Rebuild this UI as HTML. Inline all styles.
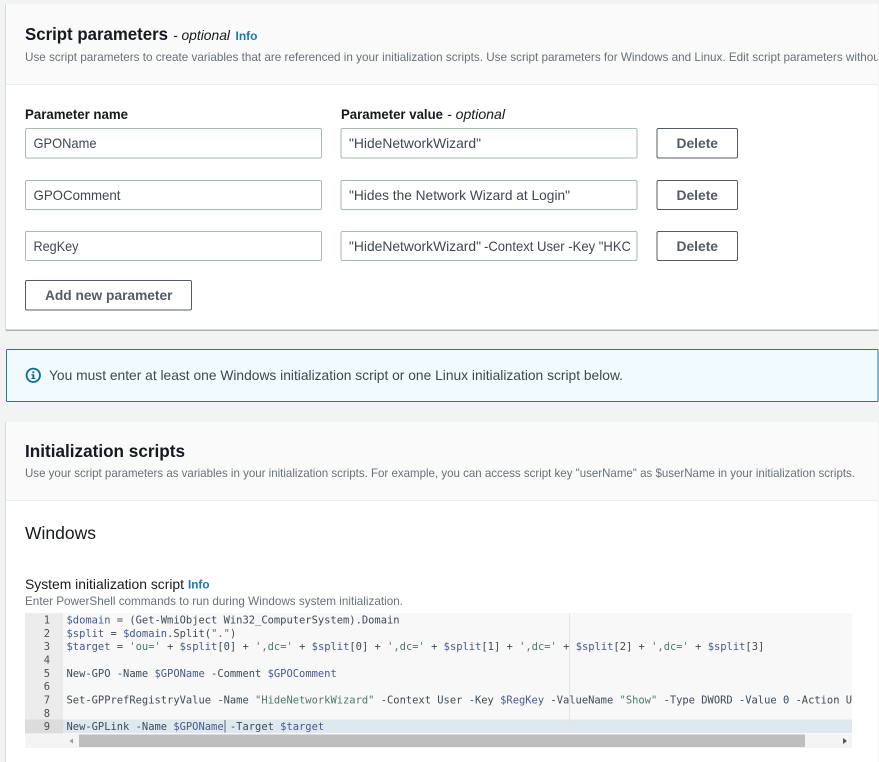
<!DOCTYPE html>
<html><head><meta charset="utf-8"><style>
html,body{margin:0;padding:0;background:#f2f3f3;width:879px;height:762px;overflow:hidden}
svg{display:block}
text{font-family:"Liberation Sans",sans-serif;white-space:pre}
.m{font-family:"DejaVu Sans Mono",monospace;font-size:10.45px;fill:#3f4a56}
.v{fill:#46598f}.s{fill:#4a7a67}.p{fill:#46525f}
.n{font-family:"DejaVu Sans Mono",monospace;font-size:10.45px;fill:#4a4f55;text-anchor:end}
.l{font-size:14px;font-weight:bold;fill:#16191f}
.i{font-size:14px;font-style:italic;fill:#16191f}
.d{font-size:12px;fill:#687078}
.t{font-size:14px;fill:#414750}
.b{font-size:14px;font-weight:bold;fill:#545b64}
.inf{font-size:12px;font-weight:bold;fill:#1a78b4}
</style></head><body>
<svg width="879" height="762" viewBox="0 0 879 762" xmlns="http://www.w3.org/2000/svg">
<defs>
<clipPath id="c1"><rect x="0" y="0" width="878" height="762"/></clipPath>
<clipPath id="c2"><rect x="64" y="613" width="788" height="121"/></clipPath>
<clipPath id="c3"><rect x="345" y="232" width="285" height="28"/></clipPath>
</defs>
<rect width="879" height="762" fill="#f2f3f3"/>

<!-- card 1 -->
<rect x="5" y="4" width="873" height="327" fill="#d5dbdb"/>
<rect x="6" y="4" width="872" height="326" fill="#fff"/>
<rect x="6" y="4" width="872" height="80" fill="#fafafa"/>
<rect x="6" y="84" width="872" height="1" fill="#eaeded"/>
<rect x="6" y="329.5" width="872" height="1.5" fill="#aab2b3"/>
<text x="25" y="40" font-size="17.5" font-weight="bold" fill="#16191f" textLength="143" lengthAdjust="spacingAndGlyphs">Script parameters</text>
<text x="173" y="40" class="i" textLength="57" lengthAdjust="spacingAndGlyphs">- optional</text>
<text x="235.5" y="40" class="inf" textLength="22" lengthAdjust="spacingAndGlyphs">Info</text>
<g clip-path="url(#c1)"><text x="25" y="61" class="d" textLength="858" lengthAdjust="spacingAndGlyphs">Use script parameters to create variables that are referenced in your initialization scripts. Use script parameters for Windows and Linux. Edit script parameters without</text></g>

<text x="25" y="119" class="l" textLength="103" lengthAdjust="spacingAndGlyphs">Parameter name</text>
<text x="341" y="119" class="l" textLength="102" lengthAdjust="spacingAndGlyphs">Parameter value</text>
<text x="447" y="119" class="i" textLength="58" lengthAdjust="spacingAndGlyphs">- optional</text>

<g fill="#fff" stroke="#aab7b8" stroke-width="1">
<rect x="25.5" y="128.5" width="296" height="29.5" rx="1.5"/>
<rect x="25.5" y="180.5" width="296" height="29" rx="1.5"/>
<rect x="25.5" y="231.5" width="296" height="29" rx="1.5"/>
<rect x="341" y="128.5" width="296" height="29.5" rx="1.5"/>
<rect x="341" y="180.5" width="296" height="29" rx="1.5"/>
<rect x="341" y="231.5" width="296" height="29" rx="1.5"/>
</g>
<g fill="#fff" stroke="#545b64" stroke-width="1">
<rect x="657" y="128.5" width="80.5" height="29.5" rx="1.5"/>
<rect x="657" y="180.5" width="80.5" height="29" rx="1.5"/>
<rect x="657" y="231.5" width="80.5" height="29" rx="1.5"/>
<rect x="25.5" y="280.5" width="166" height="29.5" rx="1.5"/>
</g>
<text x="33.5" y="148" class="t" textLength="63" lengthAdjust="spacingAndGlyphs">GPOName</text>
<text x="33.5" y="200" class="t" textLength="87" lengthAdjust="spacingAndGlyphs">GPOComment</text>
<text x="33.5" y="251" class="t" textLength="45" lengthAdjust="spacingAndGlyphs">RegKey</text>
<text x="349" y="148" class="t" textLength="132" lengthAdjust="spacingAndGlyphs">"HideNetworkWizard"</text>
<text x="349" y="200" class="t" textLength="221" lengthAdjust="spacingAndGlyphs">"Hides the Network Wizard at Login"</text>
<g clip-path="url(#c3)"><text x="349" y="251" class="t" textLength="132" lengthAdjust="spacingAndGlyphs">"HideNetworkWizard"</text>
<text x="484" y="251" class="t" textLength="147" lengthAdjust="spacingAndGlyphs">-Context User -Key "HKC</text></g>
<text x="676.5" y="148" class="b" textLength="41.5" lengthAdjust="spacingAndGlyphs">Delete</text>
<text x="676.5" y="200" class="b" textLength="41.5" lengthAdjust="spacingAndGlyphs">Delete</text>
<text x="676.5" y="251" class="b" textLength="41.5" lengthAdjust="spacingAndGlyphs">Delete</text>
<text x="45" y="300" class="b" textLength="127.5" lengthAdjust="spacingAndGlyphs">Add new parameter</text>

<!-- alert -->
<rect x="6.5" y="349.5" width="871.5" height="52" rx="1" fill="#f1faff" stroke="#1f7a9c" stroke-width="1"/>
<circle cx="33.3" cy="375.3" r="6.7" fill="none" stroke="#0d6a96" stroke-width="1.8"/>
<rect x="32.4" y="374.3" width="1.9" height="4.2" fill="#0d6a96"/>
<rect x="32.4" y="371.4" width="1.9" height="1.8" fill="#0d6a96"/>
<rect x="31.2" y="374.2" width="2" height="1" fill="#0d6a96"/>
<rect x="31.2" y="378" width="4.2" height="1" fill="#0d6a96"/>
<text x="49" y="380" class="t" textLength="574" lengthAdjust="spacingAndGlyphs">You must enter at least one Windows initialization script or one Linux initialization script below.</text>

<!-- card 2 -->
<rect x="5" y="422" width="873" height="340" fill="#d5dbdb"/>
<rect x="6" y="422" width="872" height="340" fill="#fff"/>
<rect x="6" y="422" width="872" height="78" fill="#fafafa"/>
<rect x="6" y="500" width="872" height="1" fill="#eaeded"/>
<text x="25" y="457" font-size="17.5" font-weight="bold" fill="#16191f" textLength="160" lengthAdjust="spacingAndGlyphs">Initialization scripts</text>
<text x="25" y="477" class="d" textLength="830" lengthAdjust="spacingAndGlyphs">Use your script parameters as variables in your initialization scripts. For example, you can access script key "userName" as $userName in your initialization scripts.</text>
<text x="25" y="539" font-size="17.5" fill="#16191f" textLength="71" lengthAdjust="spacingAndGlyphs">Windows</text>
<text x="25" y="589" font-size="14" fill="#16191f" textLength="159" lengthAdjust="spacingAndGlyphs">System initialization script</text>
<text x="188" y="588.5" class="inf" textLength="21.5" lengthAdjust="spacingAndGlyphs">Info</text>
<text x="25" y="605" class="d" textLength="378" lengthAdjust="spacingAndGlyphs">Enter PowerShell commands to run during Windows system initialization.</text>

<!-- editor -->
<rect x="25" y="613" width="827" height="135" fill="#f8f8f8"/>
<rect x="25" y="613" width="38" height="121" fill="#ececec"/>
<rect x="25" y="734" width="827" height="14" fill="#f4f4f4"/>
<rect x="63" y="719.5" width="789" height="13.5" fill="#dfe7ef"/>
<rect x="25" y="719.5" width="38" height="13.5" fill="#dcdcdc"/>
<rect x="569" y="613" width="1" height="120" fill="#e4e4e4"/>
<rect x="79" y="734.5" width="726" height="12.5" fill="#bebebe"/>
<path d="M73 738.5 L69.5 741 L73 743.5Z" fill="#9a9a9a"/>
<path d="M843 738 L847 741 L843 744Z" fill="#555"/>

<g>
<text class="n" x="50" y="623.5">1</text>
<text class="n" x="50" y="637">2</text>
<text class="n" x="50" y="650">3</text>
<text class="n" x="50" y="663.5">4</text>
<text class="n" x="50" y="677">5</text>
<text class="n" x="50" y="690">6</text>
<text class="n" x="50" y="703.5">7</text>
<text class="n" x="50" y="717">8</text>
<text class="n" x="50" y="730">9</text>
</g>
<g clip-path="url(#c2)">
<text class="m" x="66.5" y="623.5"><tspan class="v">$domain</tspan> = (Get-WmiObject Win32_ComputerSystem).Domain</text>
<text class="m" x="66.5" y="637"><tspan class="v">$split</tspan> = <tspan class="v">$domain</tspan>.Split(<tspan class="s">"."</tspan>)</text>
<text class="m" x="66.5" y="650"><tspan class="v">$target</tspan> = <tspan class="s">'ou='</tspan> + <tspan class="v">$split</tspan>[0] + <tspan class="s">',dc='</tspan> + <tspan class="v">$split</tspan>[0] + <tspan class="s">',dc='</tspan> + <tspan class="v">$split</tspan>[1] + <tspan class="s">',dc='</tspan> + <tspan class="v">$split</tspan>[2] + <tspan class="s">',dc='</tspan> + <tspan class="v">$split</tspan>[3]</text>
<text class="m" x="66.5" y="677">New-GPO -Name <tspan class="v">$GPOName</tspan> -Comment <tspan class="v">$GPOComment</tspan></text>
<text class="m" x="66.5" y="703.5">Set-GPPrefRegistryValue -Name <tspan class="s">"HideNetworkWizard"</tspan> -Context User -Key <tspan class="v">$RegKey</tspan> -ValueName <tspan class="s">"Show"</tspan> -Type DWORD -Value 0 -Action Update</text>
<text class="m" x="66.5" y="730">New-GPLink -Name <tspan class="v">$GPOName</tspan> -Target <tspan class="v">$target</tspan></text>
</g>
<rect x="224.5" y="720" width="1" height="12.5" fill="#5a6b7c"/>
</svg>
</body></html>
